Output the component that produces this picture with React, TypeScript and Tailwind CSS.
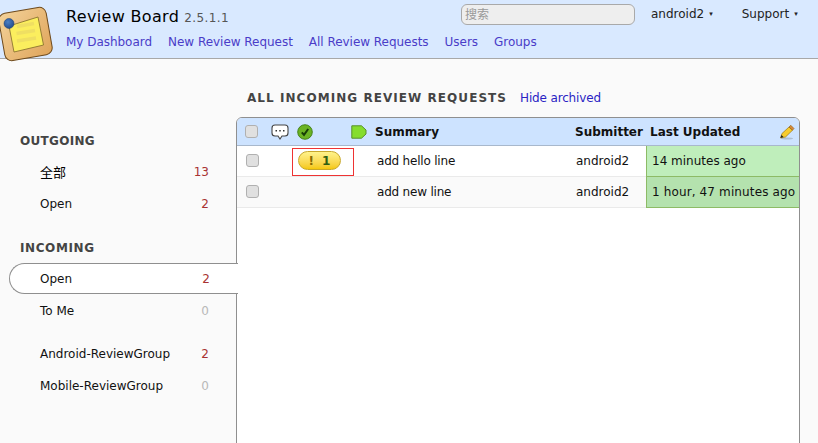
const F = "font-['DejaVu_Sans','Noto_Sans_CJK_SC',sans-serif]";

function Logo() {
  return (
    <svg width="60" height="66" viewBox="0 0 60 66" className="absolute left-0 top-0">
      <defs>
        <linearGradient id="w" x1="0" y1="0" x2="1" y2="1">
          <stop offset="0" stopColor="#f3d29a" />
          <stop offset="1" stopColor="#dfa45a" />
        </linearGradient>
        <radialGradient id="pin" cx="0.4" cy="0.35" r="0.7">
          <stop offset="0" stopColor="#4d80c4" />
          <stop offset="1" stopColor="#1f4a8c" />
        </radialGradient>
      </defs>
      <rect x="1.500" y="10" width="48" height="48" rx="7" transform="rotate(-10 25.500 34)" fill="url(#w)" stroke="#6e4a1c" strokeWidth="1" />
      <polygon points="9,26 38,17 43.500,45 14,52" fill="#fbee5e" stroke="#7f6a2a" strokeWidth="0.800" />
      <g stroke="#efdf62" strokeWidth="3.500">
        <path d="M17 26.500 L34 23.500" />
        <path d="M16.500 33.500 L35 30.500" />
        <path d="M17 41 L36 38" />
      </g>
      <circle cx="9" cy="23.500" r="5" fill="url(#pin)" stroke="#1c3c70" strokeWidth="0.500" />
    </svg>
  );
}

function Check() {
  return <span className="block w-[13px] h-[13px] rounded-[3px] bg-[#e0e0e0] border border-[#b0b0b0]" />;
}

function Item({ label, n, zero, active, cjk }: { label: string; n: number; zero?: boolean; active?: boolean; cjk?: boolean }) {
  return (
    <div
      className={
        active
          ? "relative z-10 flex items-center justify-between h-[31px] mb-[1px] ml-[9px] mr-[-1px] pl-[30px] pr-[28px] bg-white border border-[#8f8f8f] border-r-0 rounded-l-[16px]"
          : "flex items-center justify-between h-[32px] pl-[40px] pr-[28px]"
      }
    >
      <span className={cjk ? "text-black text-[13px]" : "text-[#111]"}>{label}</span>
      <span className={zero ? "text-[#b8b8b8]" : "text-[#a83232]"}>{n}</span>
    </div>
  );
}

function Row({ flag, summary, time, even }: { flag?: boolean; summary: string; time: string; even?: boolean }) {
  return (
    <div className={`flex h-[31px] border-b border-[#eaeaea] text-[#111] ${even ? "bg-[#fafafa]" : "bg-white"}`}>
      <div className="w-[30px] flex items-center pl-[9px] pb-[2px]">
        <Check />
      </div>
      <div className="relative w-[110px]">
        {flag && (
          <div className="absolute left-[25px] top-[2px] w-[62px] h-[28px] border border-[#ee3333]">
            <div className="absolute left-[5px] top-[2px] w-[43px] h-[19px] rounded-full border border-[#c9a92c] bg-gradient-to-b from-[#fff38a] to-[#f5c800] flex items-center justify-center gap-[8px] font-bold text-[12px]">
              <span className="text-[#8a6a00]">!</span>
              <span className="text-[#2f5f12]">1</span>
            </div>
          </div>
        )}
      </div>
      <div className="w-[199px] flex items-center tracking-[-0.2px]">{summary}</div>
      <div className="w-[70px] flex items-center">android2</div>
      <div className={`flex-1 flex items-center pl-[5px] border-l border-[#8dbb66] border-b border-b-[#8dbb66] whitespace-nowrap mb-[-1px] ${even ? "bg-[#b4e2ae] tracking-[0.13px]" : "bg-[#bfeebb]"}`}>
        {time}
      </div>
    </div>
  );
}

export default function App() {
  return (
    <div className={`${F} relative w-[818px] h-[443px] overflow-hidden bg-[#fafafa] text-[12px] leading-none`}>
      <header className="h-[59px] bg-[#d9e9ff] border-b border-[#a8a8a8] flex">
        <div className="w-[66px] shrink-0" />
        <div className="flex-1 flex flex-col">
          <div className="flex items-center h-[34px]">
            <div className="w-[395px] mt-[-1px] whitespace-nowrap">
              <span className="text-[16px] tracking-[0.33px] text-black">Review Board</span>
              <span className="text-[12px] text-[#555] ml-[5px] tracking-[0.4px]">2.5.1.1</span>
            </div>
            <div className="w-[174px] h-[21px] mt-[-5px] rounded-[6px] border border-[#a9a9a9] bg-[#eeeeee] flex items-center pl-[3px] text-[#999] text-[12px]">
              搜索
            </div>
            <div className="ml-[16px] mt-[-6px] flex items-center gap-[5px] text-[#222]">
              android2 <span className="text-[7px]">▾</span>
            </div>
            <div className="ml-[29px] mt-[-6px] flex items-center gap-[5px] text-[#222]">
              Support <span className="text-[7px]">▾</span>
            </div>
          </div>
          <nav className="flex gap-[16px] text-[#4a3cc8] whitespace-nowrap mt-[2px] tracking-[-0.03px]">
            <span>My Dashboard</span>
            <span>New Review Request</span>
            <span>All Review Requests</span>
            <span>Users</span>
            <span>Groups</span>
          </nav>
        </div>
      </header>
      <Logo />
      <div className="flex">
        <aside className="w-[237px] shrink-0 pt-[76px] relative z-10">
          <h3 className="pl-[20px] font-bold text-[#444] text-[12px] tracking-[0.3px] mb-[7px] h-[14px]">OUTGOING</h3>
          <Item label="全部" n={13} cjk />
          <Item label="Open" n={2} />
          <h3 className="pl-[20px] mt-[22px] font-bold text-[#444] text-[12px] tracking-[0.6px] mb-[7px] h-[14px]">INCOMING</h3>
          <Item label="Open" n={2} active />
          <Item label="To Me" n={0} zero />
          <div className="h-[11px]" />
          <Item label="Android-ReviewGroup" n={2} />
          <Item label="Mobile-ReviewGroup" n={0} zero />
        </aside>
        <main className="flex-1 pr-[18px]">
          <div className="flex items-baseline h-[58px] pt-[33px] pl-[10px] whitespace-nowrap">
            <span className="font-bold text-[#444] text-[12px] tracking-[1.05px]">ALL INCOMING REVIEW REQUESTS</span>
            <span className="ml-[13px] text-[#2a1fc4] tracking-[-0.15px]">Hide archived</span>
          </div>
          <div className="ml-[-1px] h-[340px] border border-[#8f8f8f] rounded-t-[6px] bg-white overflow-hidden">
            <div className="flex items-center h-[28px] bg-[#cde3ff] border-b border-[#a8b8cc] font-bold text-[#111] text-[12px]">
              <div className="w-[30px] pl-[8px] mt-[-1px]">
                <Check />
              </div>
              <div className="w-[108px] flex items-center shrink-0">
                <svg width="18" height="17" viewBox="0 0 18 17" className="ml-[4px] mt-[1px]">
                  <path d="M4 1 H14 a3 3 0 0 1 3 3 V9 a3 3 0 0 1-3 3 H11 L9 15 L7 12 H4 a3 3 0 0 1-3-3 V4 a3 3 0 0 1 3-3Z" fill="#fff" stroke="#444" strokeWidth="1.100" />
                  <g fill="#333"><rect x="4.500" y="6" width="1.500" height="1.500" /><rect x="8.250" y="6" width="1.500" height="1.500" /><rect x="12" y="6" width="1.500" height="1.500" /></g>
                </svg>
                <svg width="16" height="16" viewBox="0 0 16 16" className="ml-[8px]">
                  <circle cx="8" cy="8" r="7.300" fill="#6bb324" stroke="#3e7d12" strokeWidth="0.900" />
                  <path d="M4.800 8.300 L7 10.800 L11.200 5" fill="none" stroke="#173d07" strokeWidth="2" />
                </svg>
                <svg width="16" height="14" viewBox="0 0 16 14" className="ml-[38px]">
                  <path d="M.8 .8 H10.500 L15 5 V9 L10.500 13.200 H.8 Z" fill="#85dd2d" stroke="#58902a" strokeWidth="1" />
                </svg>
              </div>
              <div className="w-[200px]">Summary</div>
              <div className="w-[75px] whitespace-nowrap">Submitter</div>
              <div className="flex-1 flex items-center justify-between pr-[4px] whitespace-nowrap">
                Last Updated
                <svg width="16" height="16" viewBox="0 0 16 16">
                  <ellipse cx="8" cy="14.500" rx="6" ry="1" fill="#9aa8b8" opacity="0.6" />
                  <path d="M1.500 14 L3 9.500 L10 3 L13.500 6.200 L6.500 13 Z" fill="#f7cc2c" stroke="#9a7510" strokeWidth="0.700" />
                  <path d="M10 3 L11.800 1.300 L15 4.500 L13.500 6.200 Z" fill="#d98a3a" stroke="#8a5a10" strokeWidth="0.600" />
                  <path d="M1.500 14 L2.400 11 L4.600 13 Z" fill="#222" />
                </svg>
              </div>
            </div>
            <Row flag summary="add hello line" time="14 minutes ago" />
            <Row even summary="add new line" time="1 hour, 47 minutes ago" />
          </div>
        </main>
      </div>
    </div>
  );
}
